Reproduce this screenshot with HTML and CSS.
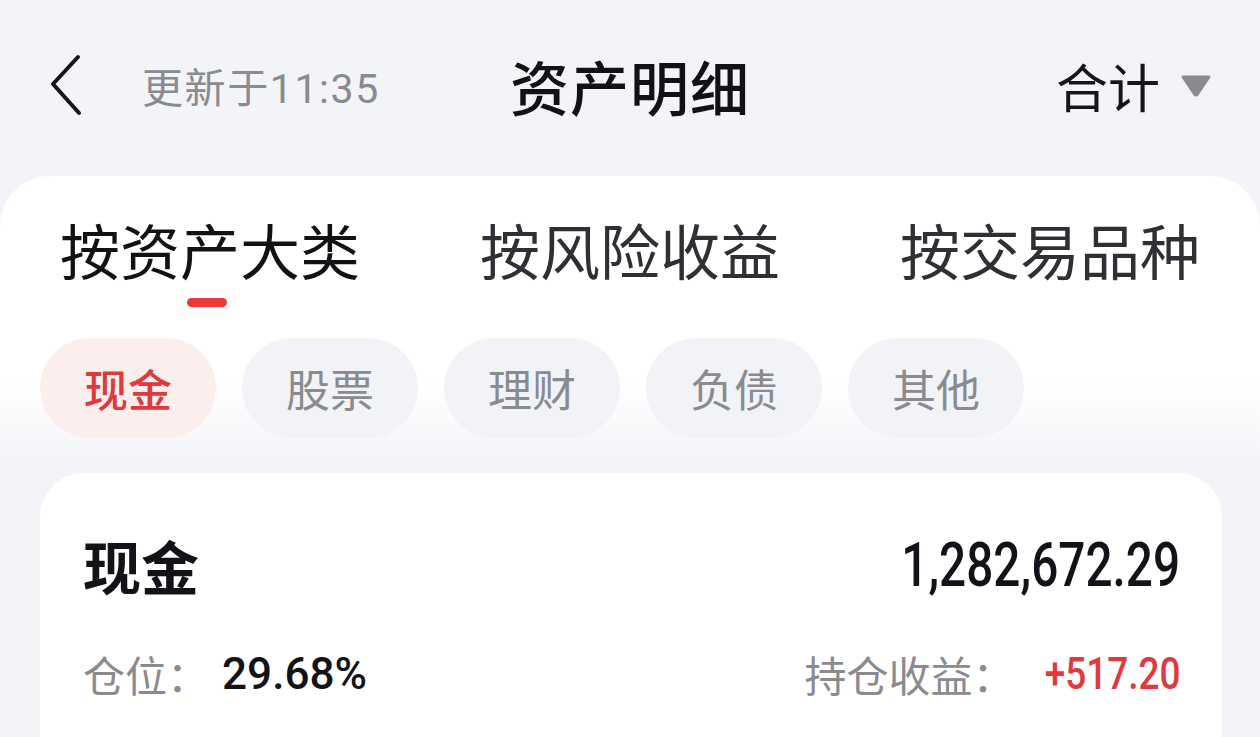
FILE: index.html
```html
<!DOCTYPE html>
<html lang="zh-CN">
<head>
<meta charset="utf-8">
<title>资产明细</title>
<link rel="stylesheet" href="styles.css">
</head>
<body>
<div class="page">
  <header class="topbar">
    <div class="left">
      <svg class="back" width="40" height="64" viewBox="0 0 40 64"><path d="M28 4 L3 31 L29 60" fill="none" stroke="#15161a" stroke-width="4" stroke-linecap="round" stroke-linejoin="round"/></svg>
      <span class="updated">更新于11:35</span>
    </div>
    <h1 class="title">资产明细</h1>
    <div class="right">
      <span class="sum">合计</span>
      <svg class="caret" width="32" height="24" viewBox="0 0 32 24"><path d="M3 3 H29 L17.5 20 Q16 22 14.5 20 Z" fill="#8a8a90" stroke="#8a8a90" stroke-width="3" stroke-linejoin="round"/></svg>
    </div>
  </header>

  <section class="panel">
    <nav class="tabs">
      <div class="tab active"><span>按资产大类</span><i class="bar"></i></div>
      <div class="tab"><span>按风险收益</span></div>
      <div class="tab"><span>按交易品种</span></div>
    </nav>
    <div class="pills">
      <div class="pill on">现金</div>
      <div class="pill">股票</div>
      <div class="pill">理财</div>
      <div class="pill">负债</div>
      <div class="pill">其他</div>
    </div>

    <div class="card">
      <div class="row head">
        <span class="name">现金</span>
        <span class="num big">1,282,672.29</span>
      </div>
      <div class="row meta">
        <span class="kv"><span class="k">仓位：</span><span class="num v pct">29.68%</span></span>
        <span class="kv"><span class="k">持仓收益：</span><span class="num v red">+517.20</span></span>
      </div>
    </div>
  </section>
</div>
</body>
</html>
```

FILE: styles.css
```css
* { box-sizing: border-box; margin: 0; padding: 0; }
html, body { background: #f3f4f8; }
body {
  width: 1260px;
  height: 737px;
  overflow: hidden;
  font-family: "Noto Sans CJK SC", "Noto Sans", sans-serif;
  color: #14151a;
}
.page { width: 1260px; }

.topbar {
  height: 176px;
  display: grid;
  grid-template-columns: 1fr auto 1fr;
  align-items: center;
  padding: 0 48px 6px 48px;
}
.left { display: flex; align-items: center; }
.back { display: block; margin-left: 2px; }
.updated {
  margin-left: 52px;
  font-family: "Roboto", "Noto Sans CJK SC", sans-serif;
  font-size: 41px;
  color: #8a8a90;
  letter-spacing: 1.6px;
}
.title {
  font-size: 59px;
  font-weight: 500;
  color: #111216;
  letter-spacing: 1px;
}
.right { display: flex; align-items: center; justify-content: flex-end; }
.sum { font-size: 52px; color: #15161a; }
.caret { margin-left: 20px; margin-top: 2px; }

.panel {
  border-radius: 50px 50px 0 0;
  background: linear-gradient(to bottom, #ffffff 205px, #f3f4f8 290px);
  padding-top: 31px;
  min-height: 600px;
}
.tabs {
  display: grid;
  grid-template-columns: repeat(3, 1fr);
  height: 104px;
}
.tab {
  display: flex;
  flex-direction: column;
  align-items: center;
  font-size: 60px;
  line-height: 84px;
  color: #2f3035;
}
.tab.active { color: #111216; }
.tab .bar {
  display: block;
  width: 40px;
  height: 9px;
  border-radius: 5px;
  background: #ea3a3a;
  margin-top: 7px;
  margin-left: -6px;
}
.pills {
  display: flex;
  gap: 26px;
  padding: 0 40px;
  margin-top: 27px;
}
.pill {
  width: 176px;
  height: 100px;
  border-radius: 50px;
  background: #f2f3f7;
  color: #8a8a8f;
  font-size: 44px;
  display: flex;
  align-items: center;
  justify-content: center;
}
.pill.on { background: #fdeeee; color: #e0393c; font-weight: 500; }

.card {
  margin: 35px 38px 0 40px;
  background: #ffffff;
  border-radius: 44px;
  padding: 52px 42px 0 43px;
  height: 320px;
}
.row { display: flex; justify-content: space-between; align-items: center; }
.name { font-size: 58px; font-weight: 700; color: #121318; line-height: 80px; }
.num {
  font-family: "Roboto", "DejaVu Sans", sans-serif;
  font-weight: 500;
  display: inline-block;
  transform: scaleX(0.77);
}
.big {
  font-size: 62px;
  color: #121318;
  transform-origin: right center;
  line-height: 80px;
}
.meta { margin-top: 38px; }
.kv { display: flex; align-items: center; }
.k { font-size: 42px; color: #8a8a8f; }
.v { font-size: 45px; color: #121318; }
.pct { transform-origin: left center; transform: scaleX(0.98); margin-left: 13px; }
.red { color: #e03a3e; transform-origin: right center; transform: scaleX(0.82); }
```
